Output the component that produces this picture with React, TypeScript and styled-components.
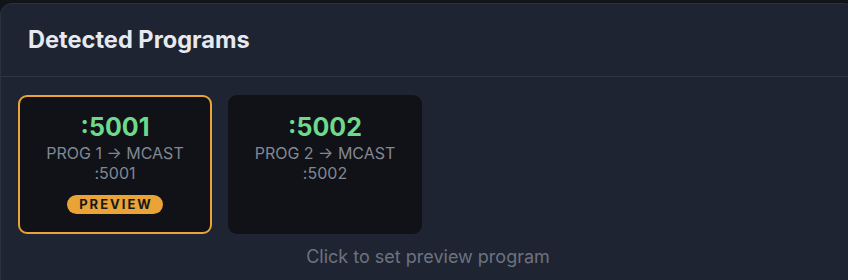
import React from "react";
import styled, { createGlobalStyle } from "styled-components";

const Global = createGlobalStyle`
  html, body { margin: 0; padding: 0; background: #111419; overflow: hidden; }
  body { font-family: Inter, "Noto Sans", "Liberation Sans", sans-serif; }
`;

const Page = styled.div`
  width: 848px;
  height: 280px;
  padding-top: 3px;
  box-sizing: border-box;
  overflow: hidden;
`;

const Panel = styled.section`
  width: 856px;
  height: 290px;
  box-sizing: border-box;
  background: #1e2431;
  border: 1px solid #2b3140;
  border-radius: 12px;
  display: flex;
  flex-direction: column;
`;

const Header = styled.header`
  padding: 22px 27px;
  border-bottom: 1px solid #2f3543;
`;

const Title = styled.h2`
  margin: 0;
  font-size: 23.6px;
  line-height: 28px;
  font-weight: 700;
  color: #e6e9ef;
`;

const Body = styled.div`
  padding: 18px 17px 0;
  display: flex;
  flex-direction: column;
`;

const Grid = styled.div`
  display: flex;
  gap: 16px;
`;

const Card = styled.button<{ $active?: boolean }>`
  width: 194px;
  height: 139px;
  box-sizing: border-box;
  background: #101217;
  border: 2px solid ${(p) => (p.$active ? "#eaa336" : "#101217")};
  border-radius: 9px;
  display: flex;
  flex-direction: column;
  align-items: center;
  padding: 15px 4px 0;
  cursor: pointer;
  font-family: inherit;
`;

const Port = styled.div`
  font-size: 25px;
  line-height: 30px;
  font-weight: 700;
  color: #6fd98b;
`;

const Label = styled.div`
  margin-top: 2px;
  font-size: 16px;
  line-height: 19.5px;
  color: #828792;
  text-align: center;
  width: 160px;
`;

const Badge = styled.span`
  margin-top: 12px;
  background: #eaa336;
  color: #17181b;
  font-size: 13px;
  font-weight: 700;
  letter-spacing: 2px;
  line-height: 19px;
  padding: 0 10px 0 12px;
  border-radius: 10px;
`;

const Hint = styled.p`
  margin: 12px 0 0;
  text-align: center;
  font-size: 18px;
  line-height: 22px;
  color: #6d7380;
`;

const programs = [
  { port: 5001, prog: 1, active: true },
  { port: 5002, prog: 2, active: false },
];

export default function App() {
  return (
    <>
      <Global />
      <Page>
        <Panel>
          <Header>
            <Title>Detected Programs</Title>
          </Header>
          <Body>
            <Grid>
              {programs.map((p) => (
                <Card key={p.port} $active={p.active}>
                  <Port>:{p.port}</Port>
                  <Label>
                    PROG {p.prog} → MCAST :{p.port}
                  </Label>
                  {p.active && <Badge>PREVIEW</Badge>}
                </Card>
              ))}
            </Grid>
            <Hint>Click to set preview program</Hint>
          </Body>
        </Panel>
      </Page>
    </>
  );
}
